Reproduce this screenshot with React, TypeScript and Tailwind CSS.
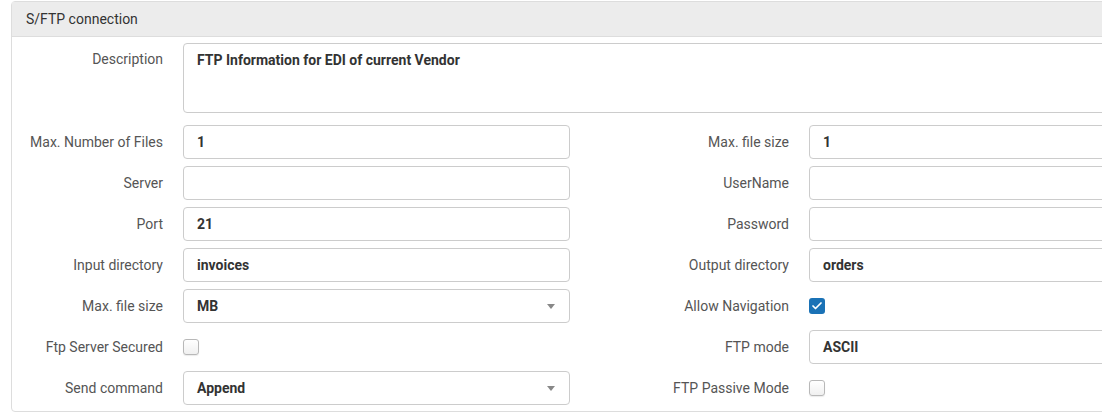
import { Check } from 'lucide-react';

type Side = {
    label: string;
    kind: 'input' | 'select' | 'checkbox';
    value?: string;
    checked?: boolean;
};

const rows: [Side, Side][] = [
    [
        { label: 'Max. Number of Files', kind: 'input', value: '1' },
        { label: 'Max. file size', kind: 'input', value: '1' },
    ],
    [
        { label: 'Server', kind: 'input', value: '' },
        { label: 'UserName', kind: 'input', value: '' },
    ],
    [
        { label: 'Port', kind: 'input', value: '21' },
        { label: 'Password', kind: 'input', value: '' },
    ],
    [
        { label: 'Input directory', kind: 'input', value: 'invoices' },
        { label: 'Output directory', kind: 'input', value: 'orders' },
    ],
    [
        { label: 'Max. file size', kind: 'select', value: 'MB' },
        { label: 'Allow Navigation', kind: 'checkbox', checked: true },
    ],
    [
        { label: 'Ftp Server Secured', kind: 'checkbox', checked: false },
        { label: 'FTP mode', kind: 'input', value: 'ASCII' },
    ],
    [
        { label: 'Send command', kind: 'select', value: 'Append' },
        { label: 'FTP Passive Mode', kind: 'checkbox', checked: false },
    ],
];

function Field({ side }: { side: Side }) {
    if (side.kind === 'checkbox') {
        return (
            <div className="flex h-[34px] items-center">
                {side.checked ? (
                    <span className="flex h-4 w-4 items-center justify-center rounded-[3px] bg-[#1a72b6]">
                        <Check className="h-3 w-3 text-white" strokeWidth={3.5} />
                    </span>
                ) : (
                    <span className="h-4 w-4 rounded-[3px] border border-[#b8b8b8] bg-gradient-to-b from-white to-[#f0f0f0] shadow-[0_1px_1px_rgba(0,0,0,0.08)]" />
                )}
            </div>
        );
    }
    return (
        <div className="flex h-[34px] items-center justify-between rounded-[4px] border border-[#cccccc] bg-white pl-[13px] pr-[13px] text-[14px] font-bold text-[#333]">
            <span>{side.value}</span>
            {side.kind === 'select' && (
                <svg width="8" height="5" viewBox="0 0 8 5" className="mr-[1px]">
                    <path d="M0 0h8L4 5z" fill="#888" />
                </svg>
            )}
        </div>
    );
}

export default function App() {
    return (
        <div className="h-[413px] w-[1102px] overflow-hidden bg-white pt-[1px] font-['Roboto',sans-serif]">
            <div className="ml-[11px] w-[1250px] rounded-[4px] border border-[#dddddd] bg-white">
                <div className="flex h-[35px] items-center border-b border-[#dddddd] bg-[#ececec] pl-[14px] text-[14px] text-[#333]">
                    S/FTP connection
                </div>
                <div className="flex flex-col gap-[7px] pt-[6px] pb-[6px]">
                    <div className="mb-[5px] flex gap-5">
                        <label className="flex h-[33px] w-[151px] shrink-0 items-center justify-end text-[14px] text-[#555]">
                            Description
                        </label>
                        <div className="h-[70px] flex-1 rounded-[4px] border border-[#cccccc] pt-[6px] pl-[13px] text-[14px] font-bold text-[#333]">
                            FTP Information for EDI of current Vendor
                        </div>
                    </div>
                    {rows.map(([left, right], i) => (
                        <div key={i} className="flex gap-5">
                            <label className="flex h-[34px] w-[151px] shrink-0 items-center justify-end text-[14px] text-[#555]">
                                {left.label}
                            </label>
                            <div className="w-[387px] shrink-0">
                                <Field side={left} />
                            </div>
                            <label className="flex h-[34px] w-[199px] shrink-0 items-center justify-end text-[14px] text-[#555]">
                                {right.label}
                            </label>
                            <div className="flex-1">
                                <Field side={right} />
                            </div>
                        </div>
                    ))}
                </div>
            </div>
        </div>
    );
}
